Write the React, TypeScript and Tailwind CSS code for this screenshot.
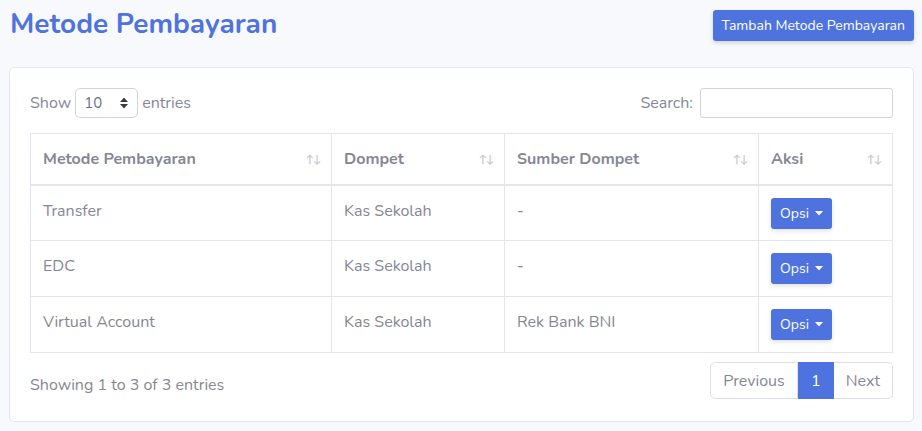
import { useState } from 'react';

const rows = [
  { metode: "Transfer", dompet: "Kas Sekolah", sumber: "-" },
  { metode: "EDC", dompet: "Kas Sekolah", sumber: "-" },
  { metode: "Virtual Account", dompet: "Kas Sekolah", sumber: "Rek Bank BNI" },
];

const SortIcon = () => (
  <span className="absolute right-[10px] top-1/2 -translate-y-1/2 flex text-[11px] leading-none">
    <span className="text-[#c9cbd4]">↑</span>
    <span className="text-[#c9cbd4] -ml-[1px]">↓</span>
  </span>
);

const App = () => {
  const [entries, setEntries] = useState("10");

  return (
    <div
      className="min-h-[431px] bg-[#f8f9fc] pl-[9px] pr-[8px] pt-[10px] text-[#858796]"
      style={{ fontFamily: "Nunito, Lato, 'Noto Sans', sans-serif" }}
    >
      <div className="flex items-start justify-between">
        <h1 className="text-[28px] leading-[30px] font-bold text-[#4e73df] -mt-[1px] pl-[1px]">Metode Pembayaran</h1>
        <button className="h-[31px] px-[9px] rounded-[3px] bg-[#4e73df] text-white text-[14px] shadow-[0_2px_4px_rgba(58,59,69,0.2)]">
          Tambah Metode Pembayaran
        </button>
      </div>

      <div className="mt-[26px] bg-white border border-[#e3e6f0] rounded-[5px] px-[20px] pt-[20px] pb-[22px]">
        <div className="flex items-center justify-between h-[30px]">
          <div className="flex items-center text-[16px]">
            <span>Show</span>
            <div className="relative mx-[4px]">
              <select
                value={entries}
                onChange={(e) => setEntries(e.target.value)}
                className="appearance-none w-[63px] h-[30px] border border-[#d1d3e2] rounded-[5px] pl-[8px] text-[15px] text-[#6e707e] bg-white"
              >
                <option>10</option>
                <option>25</option>
                <option>50</option>
                <option>100</option>
              </select>
              <svg className="absolute right-[10px] top-1/2 -translate-y-1/2 pointer-events-none" width="8" height="11" viewBox="0 0 8 11">
                <path d="M4 0 L8 4.5 H0 Z M0 6.5 H8 L4 11 Z" fill="#3a3b45" />
              </svg>
            </div>
            <span>entries</span>
          </div>
          <div className="flex items-center text-[16px]">
            <span className="mr-[7px]">Search:</span>
            <input className="w-[193px] h-[30px] border border-[#d1d3e2] rounded-[3px] outline-none px-2" />
          </div>
        </div>

        <table className="w-full mt-[15px] border-collapse text-[16px]">
          <thead>
            <tr className="h-[51px]">
              <th className="relative w-[301px] text-left font-bold px-[12px] border border-[#e3e6f0] border-b-2">Metode Pembayaran<SortIcon /></th>
              <th className="relative w-[173px] text-left font-bold px-[12px] border border-[#e3e6f0] border-b-2">Dompet<SortIcon /></th>
              <th className="relative w-[254px] text-left font-bold px-[12px] border border-[#e3e6f0] border-b-2">Sumber Dompet<SortIcon /></th>
              <th className="relative text-left font-bold px-[12px] border border-[#e3e6f0] border-b-2">Aksi<SortIcon /></th>
            </tr>
          </thead>
          <tbody>
            {rows.map((r) => (
              <tr key={r.metode} className="h-[56px]">
                <td className="px-[12px] border border-[#e3e6f0] align-top pt-[13px]">{r.metode}</td>
                <td className="px-[12px] border border-[#e3e6f0] align-top pt-[13px]">{r.dompet}</td>
                <td className="px-[12px] border border-[#e3e6f0] align-top pt-[13px]">{r.sumber}</td>
                <td className="px-[12px] border border-[#e3e6f0] align-top pt-[12px]">
                  <button className="flex items-center h-[31px] px-[9px] rounded-[3px] bg-[#4e73df] text-white text-[14px] shadow-[0_2px_4px_rgba(58,59,69,0.15)]">
                    Opsi
                    <svg className="ml-[6px]" width="8" height="5" viewBox="0 0 8 5">
                      <path d="M0 0 H8 L4 4.5 Z" fill="white" />
                    </svg>
                  </button>
                </td>
              </tr>
            ))}
          </tbody>
        </table>

        <div className="flex items-start justify-between mt-[9px]">
          <div className="pt-[11px] text-[16px]">Showing 1 to 3 of 3 entries</div>
          <div className="flex h-[37px] text-[16px]">
            <button className="px-[12px] border border-[#dddfeb] rounded-l-[5px] bg-white text-[#858796]">Previous</button>
            <button className="w-[36px] bg-[#4e73df] text-white border border-[#4e73df]">1</button>
            <button className="px-[12px] border border-[#dddfeb] border-l-0 rounded-r-[5px] bg-white text-[#858796]">Next</button>
          </div>
        </div>
      </div>
    </div>
  );
};

export default App;
